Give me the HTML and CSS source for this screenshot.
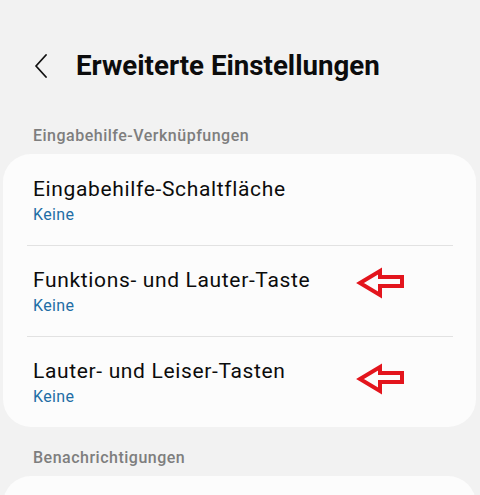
FILE: index.html
```html
<!DOCTYPE html>
<html lang="de">
<head>
    <meta charset="UTF-8" />
    <meta name="viewport" content="width=device-width, initial-scale=1.0"/>
    <title>Erweiterte Einstellungen</title>
    <link rel="stylesheet" href="styles.css">
</head>
<body>
    <header class="topbar">
        <a class="back" href="#">
            <svg width="14" height="24" viewBox="0 0 14 24">
                <path d="M12 1 L2 12 L12 23" fill="none" stroke="#111" stroke-width="1.8" stroke-linecap="round" stroke-linejoin="round"/>
            </svg>
        </a>
        <h1>Erweiterte Einstellungen</h1>
    </header>

    <main>
        <h2 class="section-title">Eingabehilfe-Verknüpfungen</h2>
        <div class="card">
            <div class="row">
                <p class="row-title">Eingabehilfe-Schaltfläche</p>
                <p class="row-value">Keine</p>
            </div>
            <div class="row">
                <p class="row-title">Funktions- und Lauter-Taste</p>
                <p class="row-value">Keine</p>
                <svg class="arrow arrow-first" width="52" height="32" viewBox="0 0 52 32">
                    <path d="M5 16 L25 4 L25 10 L47 10 L47 19 L25 19 L25 28 Z" />
                </svg>
            </div>
            <div class="row">
                <p class="row-title">Lauter- und Leiser-Tasten</p>
                <p class="row-value">Keine</p>
                <svg class="arrow arrow-second" width="52" height="32" viewBox="0 0 52 32">
                    <path d="M5 16 L25 4 L25 10 L47 10 L47 19 L25 19 L25 28 Z" />
                </svg>
            </div>
        </div>

        <h2 class="section-title next">Benachrichtigungen</h2>
        <div class="card card-peek"></div>
    </main>
</body>
</html>
```

FILE: styles.css
```css
body {
    font-family: Roboto, 'Noto Sans', sans-serif;
    margin: 0; padding: 0;
    background: #f2f2f2; color: #111;
    overflow: hidden;
}

.topbar {
    display: flex; align-items: center;
    padding: 49px 0 0 34px;
    height: 34px;
}
.back {
    display: flex; width: 14px; height: 24px;
    margin-right: 28px;
}
.topbar h1 {
    margin: 0;
    font-size: 27.7px; line-height: 34px; font-weight: 700;
    color: #0c0c0c;
}

.section-title {
    margin: 43px 0 8px 33px;
    font-size: 16px; line-height: 20px; font-weight: 500;
    letter-spacing: 0.5px;
    color: #7e7e7e;
}
.section-title.next {
    margin-top: 21px;
}

.card {
    background: #fcfcfc;
    margin: 0 4px 0 3px;
    border-radius: 28px;
}
.card-peek {
    height: 60px;
}

.row {
    position: relative;
    padding: 22px 30px 19px;
}
.row + .row::before {
    content: '';
    position: absolute; top: 0; left: 24px; right: 23px;
    height: 1px; background: #e2e2e2;
}

.row-title {
    margin: 0;
    font-size: 21px; line-height: 26px;
    letter-spacing: 0.65px;
    color: #0c0c0c;
}
.row-value {
    margin: 2px 0 0;
    font-size: 16px; line-height: 22px;
    letter-spacing: 0.35px;
    color: #1f6ea5;
}

.arrow {
    position: absolute; left: 352px;
}
.arrow path {
    fill: none; stroke: #e3151d; stroke-width: 4; stroke-linejoin: miter;
}
.arrow-first { top: 22px; }
.arrow-second { top: 27px; }
```
